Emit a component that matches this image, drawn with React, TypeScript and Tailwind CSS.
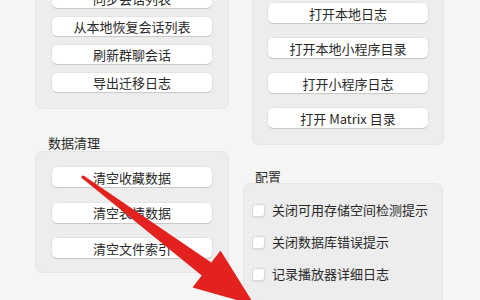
import React from 'react'

const FONT = { fontFamily: '"Noto Sans CJK SC", "Noto Sans", sans-serif' }

const LEFT_TOP = ['同步会话列表', '从本地恢复会话列表', '刷新群聊会话', '导出迁移日志']
const CLEANUP = ['清空收藏数据', '清空表情数据', '清空文件索引']
const RIGHT_TOP = ['打开本地日志', '打开本地小程序目录', '打开小程序日志', '打开 Matrix 目录']
// last row only shows the top edge of its checkbox
const CONFIG = ['关闭可用存储空间检测提示', '关闭数据库错误提示', '记录播放器详细日志', '']

function Btn({ label, h }: { label: string; h: string }) {
  return (
    <button
      className={`${h} w-[160px] bg-white rounded-[5px] text-[13px] leading-none text-[#2a2a2a] flex items-center justify-center shadow-[0_1px_1px_rgba(0,0,0,0.13),0_0_0_0.5px_rgba(0,0,0,0.07)]`}
    >
      {label}
    </button>
  )
}

function Panel({ children, className = '' }: { children: React.ReactNode; className?: string }) {
  return (
    <div className={`bg-[#ededed] border border-[#e5e5e5] rounded-[7px] flex flex-col items-center ${className}`}>
      {children}
    </div>
  )
}

export default function App() {
  return (
    <div className="relative w-[480px] h-[300px] overflow-hidden bg-[#f5f5f5]" style={FONT}>
      <div className="flex gap-[23px] pl-[35px]">
        {/* left column */}
        <div className="w-[194px] flex flex-col">
          <Panel className="mt-[-28px] pt-[16px] pb-[16px] gap-[9px]">
            {LEFT_TOP.map(l => <Btn key={l} label={l} h="h-[19px]" />)}
          </Panel>
          <div className="pt-[26px] pl-[13px] text-[13px] leading-[16px] text-[#2a2a2a]">数据清理</div>
          <Panel className="pt-[15px] pb-[14px] gap-[15.5px]">
            {CLEANUP.map(l => <Btn key={l} label={l} h="h-[20px]" />)}
          </Panel>
        </div>

        {/* right column */}
        <div className="w-[192px] flex flex-col">
          <Panel className="mt-[-14px] pt-[16px] pb-[16px] gap-[15px]">
            {RIGHT_TOP.map(l => <Btn key={l} label={l} h="h-[20px]" />)}
          </Panel>
          <div className="pt-[24px] pl-[3px] text-[13px] leading-[16px] text-[#2a2a2a]">配置</div>
          <div className="ml-[-9px] mt-[-2px] w-[200px] bg-[#ededed] border border-[#e5e5e5] rounded-[7px] pt-[10px] pl-[8px] flex flex-col">
            {CONFIG.map((l, i) => (
              <label key={i} className="h-[32px] flex items-center gap-[7px] text-[13px] text-[#2a2a2a]">
                <span className="w-[13px] h-[13px] rounded-[3px] bg-white border border-[#d9d9d9] shadow-[0_0.5px_1px_rgba(0,0,0,0.08)]" />
                {l && <span>{l}</span>}
              </label>
            ))}
          </div>
        </div>
      </div>

      {/* red arrow overlay */}
      <svg className="absolute inset-0 pointer-events-none" width="480" height="300" viewBox="0 0 480 300">
        <polygon
          points="83.9,175.8 211.3,262.6 220.5,250.4 254.5,305 192.5,287.6 201.7,275.4 82.1,178.2"
          fill="#e3221f"
        />
        <circle cx="83" cy="177" r="1.6" fill="#e3221f" />
      </svg>
    </div>
  )
}
